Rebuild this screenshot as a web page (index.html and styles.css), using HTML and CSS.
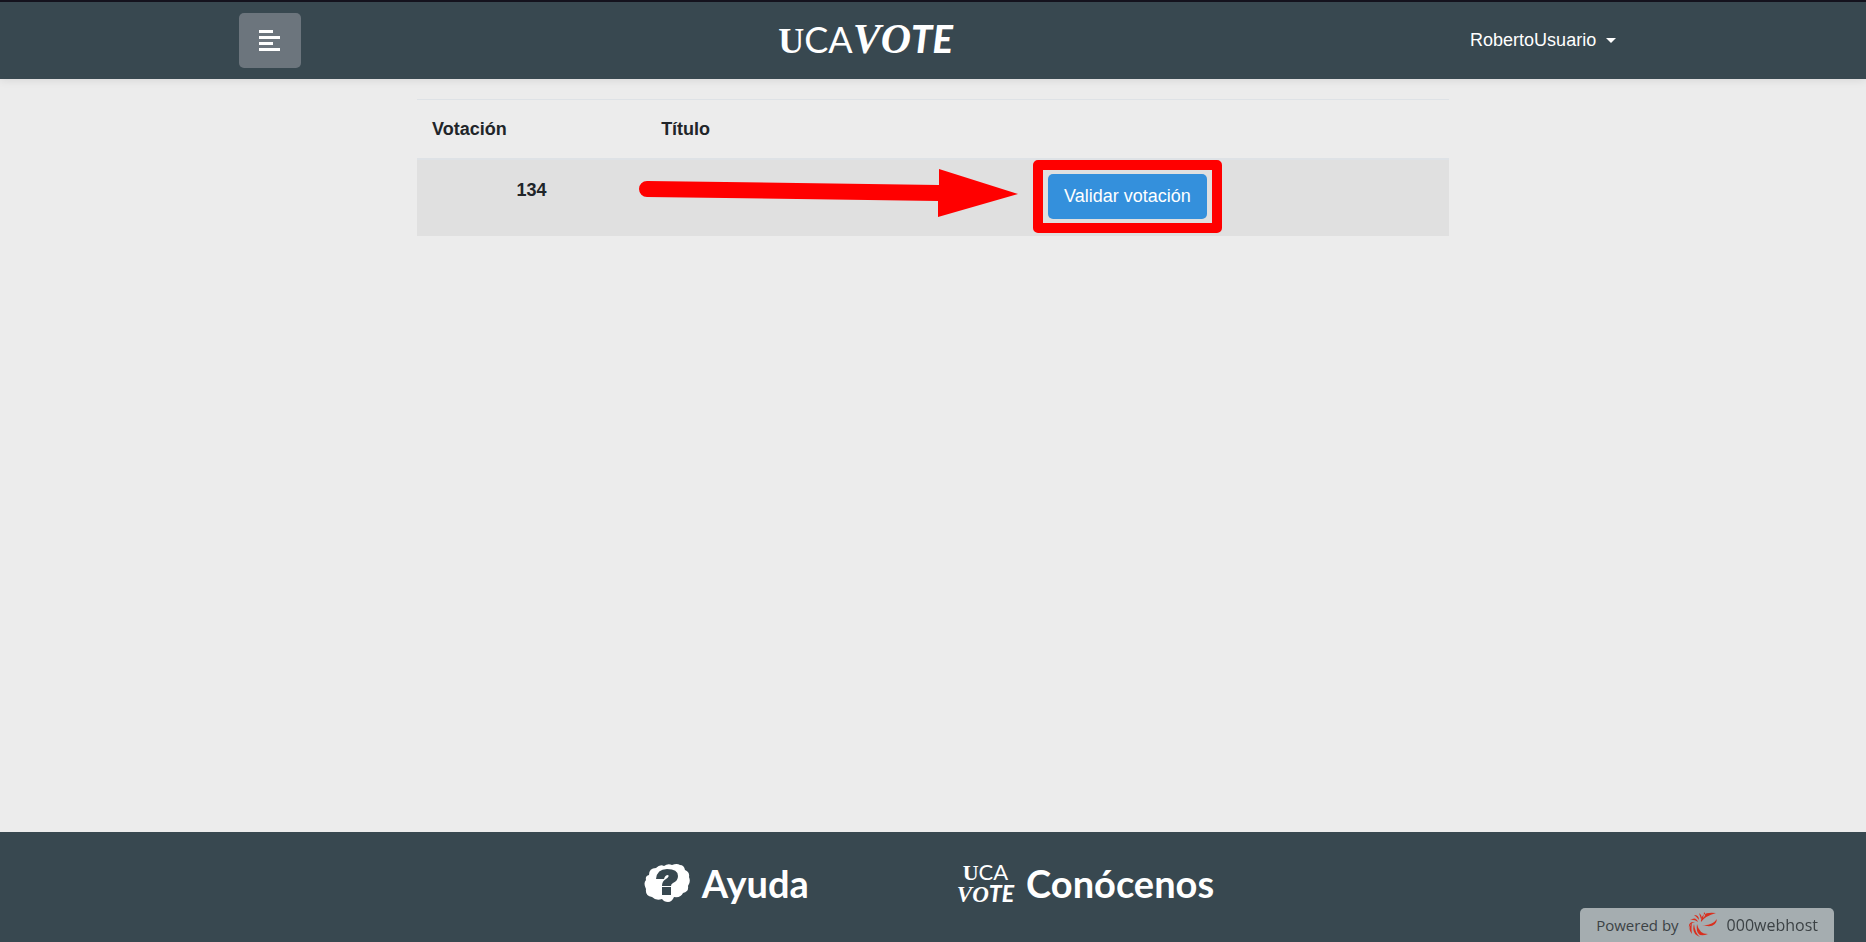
FILE: index.html
```html
<!DOCTYPE html>
<html lang="es">
<head>
<meta charset="utf-8">
<title>UCAVOTE</title>
<link rel="stylesheet" href="styles.css">
</head>
<body>
<header class="navbar">
  <div class="navbar-inner">
    <button class="menu-button" type="button" aria-label="Menú">
      <svg class="menu-icon" viewBox="0 0 21 21" aria-hidden="true"><path d="M0 0h14v3H0zM0 6h21v3H0zM0 12h14v3H0zM0 18h21v3H0z"/></svg>
    </button>
    <a class="logo" href="#"><span class="logo-u">U</span><span class="logo-ca">CA</span><span class="logo-vo">VO</span><span class="logo-te">TE</span></a>
    <button class="user-menu" type="button">RobertoUsuario<span class="caret"></span></button>
  </div>
</header>
<main class="content">
  <table class="votes">
    <thead>
      <tr><th scope="col">Votación</th><th scope="col">Título</th><th></th></tr>
    </thead>
    <tbody>
      <tr>
        <th scope="row" class="vote-id">134</th>
        <td class="vote-title">
          <svg class="arrow" viewBox="0 0 380 50" aria-hidden="true"><path d="M8 13 300 17V1L379 26 299 49V33L8 29A8 8 0 0 1 8 13Z"/></svg>
        </td>
        <td class="vote-action"><span class="highlight"><button class="validate" type="button">Validar votación</button></span></td>
      </tr>
    </tbody>
  </table>
</main>
<footer class="footer">
  <a class="footer-link" href="#">
    <svg class="help-icon" viewBox="0 0 46 38" aria-hidden="true">
      <path class="cloud" d="M5 11Q5 4 12 4Q16 0 20 2Q24-1 28 1Q33-1 36 1Q40 1 41 6Q46 8 45 13Q47 18 44 22Q45 28 39 29Q37 34 30 33Q28 38 24 38Q20 38 18 35Q12 37 8 33Q1 32 2 25Q-1 19 2 16Q1 12 5 11Z"/>
      <path class="mark" d="M12 15Q13 5 23 5Q34 5 34 12Q34 17 29 19Q27 20 27 22H18Q18 17 22 15Q26 12 24 11Q21 11 20 15ZM18 23H27V31H18Z"/>
    </svg>
    <span>Ayuda</span>
  </a>
  <a class="footer-link" href="#">
    <span class="mini-logo"><span class="mini-top"><span class="logo-u">U</span><span class="logo-ca">CA</span></span><span class="mini-bottom"><span class="logo-vo">VO</span><span class="logo-te">TE</span></span></span>
    <span>Conócenos</span>
  </a>
</footer>
<a class="host-badge" href="#">
  <span>Powered by</span>
  <svg class="host-icon" viewBox="0 0 30 26" aria-hidden="true"><path d="M28 1Q12-1 13 10Q17 4 28 1ZM29 7Q28 17 14 13Q24 14 29 7ZM20 22Q7 27 9 12Q11 22 20 22ZM12 25Q3 22 6 12Q7 21 12 25ZM4 22Q-1 17 4 11Q3 17 4 22ZM1 16Q0 9 7 10Q2 11 1 16ZM2 8Q8 4 10 10Q6 7 2 8ZM6 3Q11 3 11 8Q9 5 6 3ZM11 1Q15 4 13 7Q12 4 11 1ZM16 0Q19 3 15 6Q16 3 16 0Z"/></svg>
  <span class="host-name">000webhost</span>
</a>
</body>
</html>
```
FILE: styles.css
```css
* { box-sizing: border-box; }
body {
  margin: 0;
  min-height: 100vh;
  display: flex;
  flex-direction: column;
  background: #ececec;
  color: #212529;
  font: 18px/27px "Liberation Sans", Arial, sans-serif;
}
a { color: inherit; text-decoration: none; }
button { font: inherit; cursor: pointer; }
.navbar {
  background: #384850;
  border-top: 2px solid #14121d;
  box-shadow: 0 2px 8px rgba(0, 0, 0, .08);
  color: #fff;
}
.navbar-inner {
  display: grid;
  grid-template-columns: 4fr auto 5fr;
  align-items: center;
  width: 74.4%;
  margin: 0 auto;
  padding: 11px 0;
}
.menu-button {
  display: grid;
  place-items: center;
  width: 62px;
  height: 55px;
  padding: 0;
  border: 0;
  border-radius: 5px;
  background: #6c757d;
}
.menu-icon { width: 21px; height: 21px; fill: #fff; }
.logo { display: flex; align-items: baseline; padding-bottom: 2px; line-height: 40px; }
.logo-u { font-family: "Liberation Serif", serif; font-size: 36px; font-weight: 700; }
.logo-ca { font-family: Lato, sans-serif; font-size: 36px; }
.logo-vo { font-family: "Liberation Serif", serif; font-size: 42px; font-weight: 700; font-style: italic; }
.logo-te { font-family: Lato, sans-serif; font-size: 38px; font-weight: 900; font-style: italic; }
.user-menu {
  justify-self: end;
  display: flex;
  align-items: center;
  gap: 10px;
  padding: 0 11px;
  border: 0;
  background: none;
  color: #fff;
}
.caret { border: 5px solid transparent; border-top-color: #fff; border-bottom: 0; }
.content { flex: 1; width: 55.3%; margin: 0 auto; padding-top: 20px; }
.votes { width: 100%; table-layout: fixed; border-collapse: collapse; }
.votes th, .votes td { padding: 17px 15px; text-align: left; vertical-align: top; }
.votes thead th { padding: 16px 15px 15px; border-top: 1px solid #dee2e6; border-bottom: 2px solid #dee2e6; }
.votes th:first-child { width: 22.2%; }
.votes th:nth-child(2) { width: 37.5%; }
.votes tbody tr { height: 77px; background: #e0e0e0; }
.votes tbody .vote-id { text-align: center; }
.votes tbody .vote-title { position: relative; }
.arrow { position: absolute; left: -7px; top: 8px; width: 380px; height: 50px; fill: #f00; }
.votes tbody .vote-action { padding: 0; }
.highlight { display: inline-flex; padding: 4px 5px; border: 10px solid #f00; border-radius: 5px; }
.validate {
  height: 45px;
  padding: 0 16px;
  border: 0;
  border-radius: 5px;
  background: #3490dc;
  color: #fff;
  white-space: nowrap;
}
.footer {
  display: flex;
  justify-content: center;
  align-items: flex-start;
  gap: 148px;
  min-height: 110px;
  padding: 29px 8px 0 0;
  background: #384850;
  color: #fff;
  font: 700 38px/44px Lato, sans-serif;
}
.footer-link { display: flex; align-items: center; gap: 12px; }
.help-icon { width: 46px; height: 38px; }
.cloud { fill: #fff; }
.mark { fill: #384850; }
.mini-logo { display: flex; flex-direction: column; align-items: center; font-weight: 400; line-height: 20px; }
.mini-top, .mini-bottom { display: flex; align-items: baseline; }
.mini-logo .logo-u, .mini-logo .logo-ca { font-size: 22px; }
.mini-logo .logo-vo, .mini-logo .logo-te { font-size: 23px; }
.host-badge {
  position: fixed;
  right: 32px;
  bottom: 0;
  display: flex;
  align-items: center;
  gap: 9px;
  height: 34px;
  padding: 0 16px;
  border-radius: 5px 5px 0 0;
  background: #a5adb0;
  color: #3c4245;
  font: 15px/34px "Open Sans", sans-serif;
}
.host-icon { width: 30px; height: 26px; fill: #d9301f; }
.host-name { font-size: 16px; font-weight: 500; }
```
